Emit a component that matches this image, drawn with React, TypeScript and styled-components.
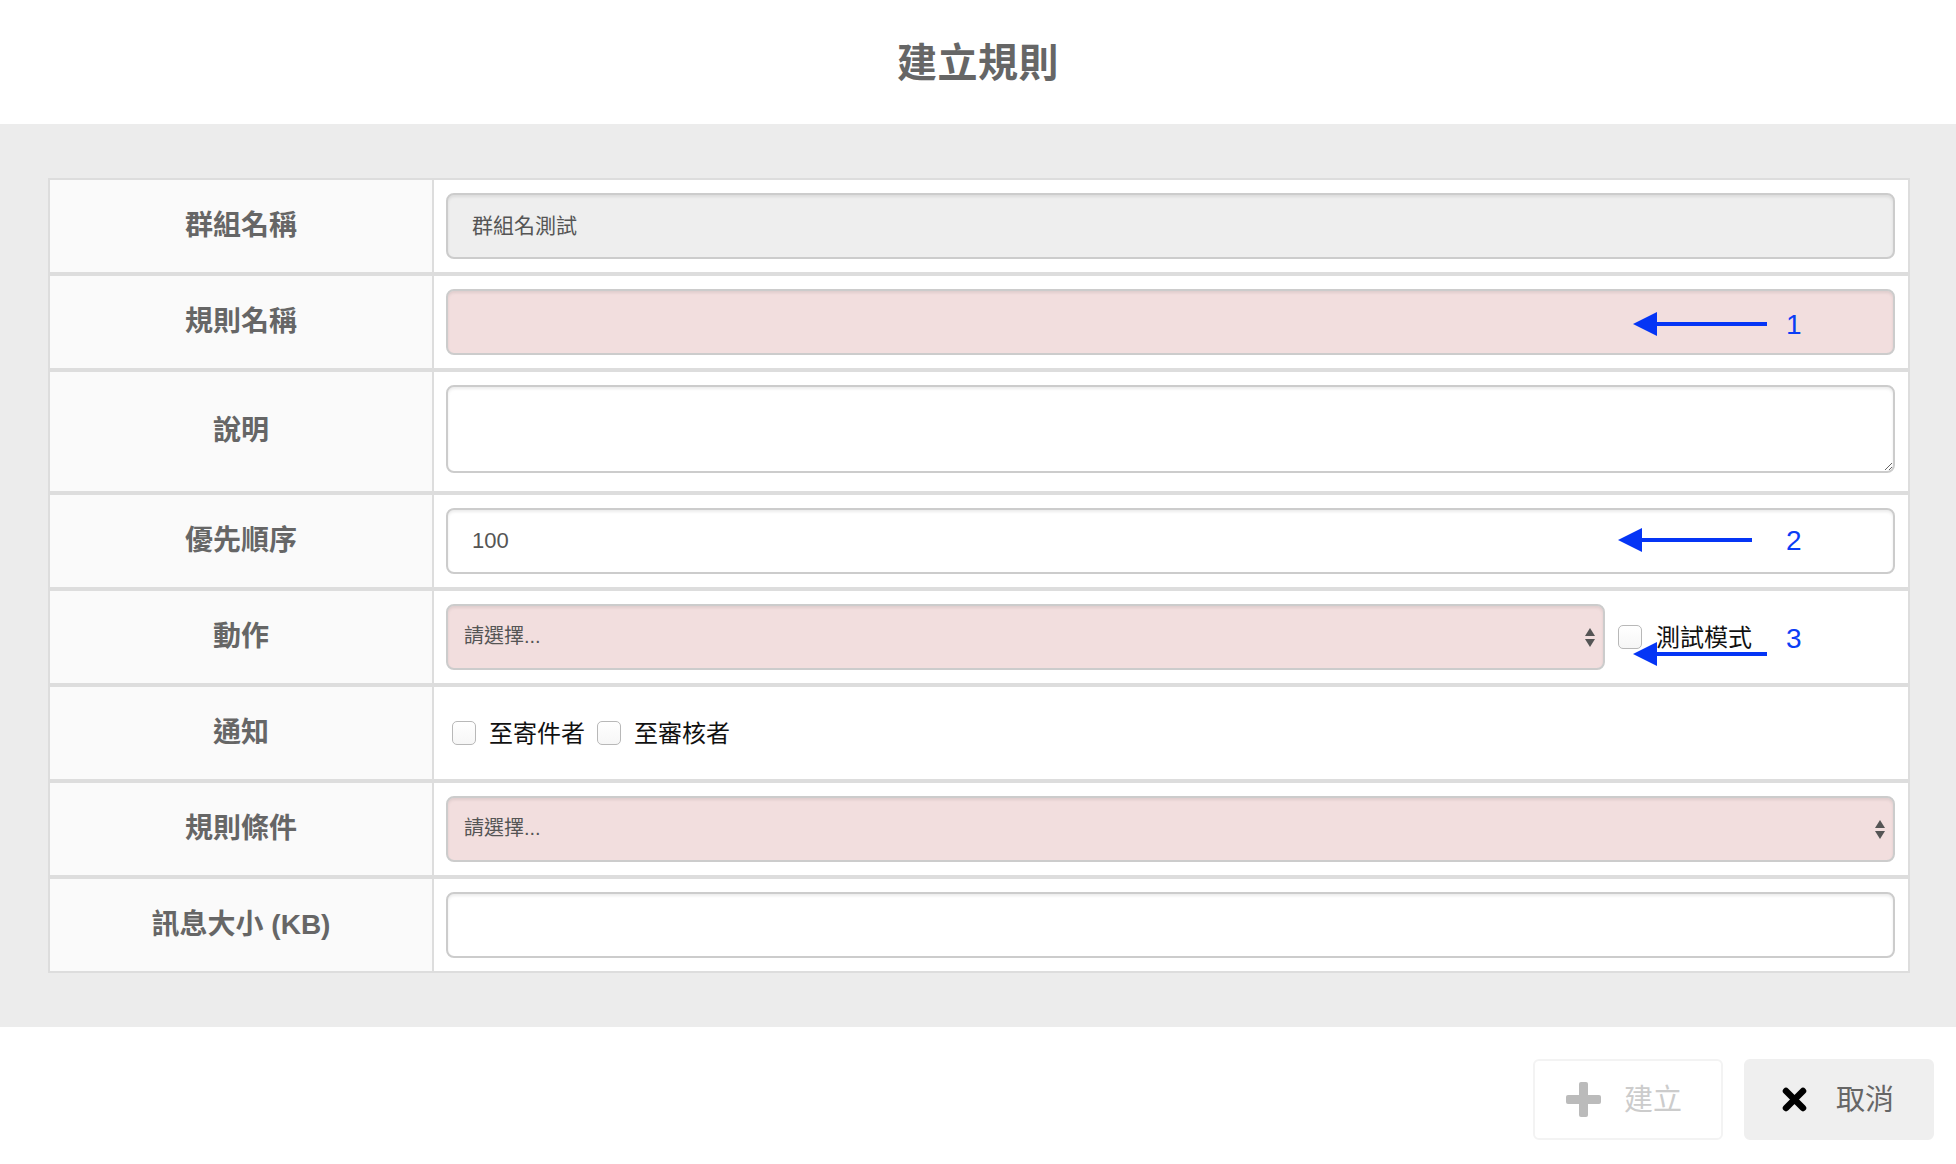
import React from "react";
import styled, { createGlobalStyle } from "styled-components";

const GlobalStyle = createGlobalStyle`
  html, body { margin: 0; padding: 0; background: #ffffff; }
  body { font-family: "Liberation Sans", "Noto Sans CJK TC", sans-serif; }
  * { box-sizing: border-box; }
`;

const Page = styled.div`
  width: 1956px;
  min-height: 1164px;
  display: flex;
  flex-direction: column;
  background: #fff;
`;

const Header = styled.header`
  height: 124px;
  display: flex;
  align-items: center;
  justify-content: center;
  padding-bottom: 5px;
`;

const Title = styled.h1`
  margin: 0;
  font-size: 40px;
  font-weight: 700;
  color: #666;
  letter-spacing: 0.5px;
`;

const Body = styled.main`
  background: #ececec;
  padding: 54px 46px 54px 48px;
`;

const FormTable = styled.div`
  border: 2px solid #dddddd;
  background: #fff;
  display: flex;
  flex-direction: column;
`;

const Row = styled.div`
  display: grid;
  grid-template-columns: 384px 1fr;
  border-bottom: 4px solid #dddddd;
  &:last-child { border-bottom: none; }
`;

const LabelCell = styled.div`
  background: #fafafa;
  border-right: 2px solid #dddddd;
  display: flex;
  align-items: center;
  justify-content: center;
  padding-bottom: 7px;
  font-size: 28px;
  font-weight: 700;
  color: #666;
`;

const ValueCell = styled.div<{ $padBottom?: number }>`
  position: relative;
  display: flex;
  align-items: center;
  min-height: 92px;
  padding: 13px 13px ${(p) => p.$padBottom ?? 13}px 12px;
`;

const TextInput = styled.input<{ $bg?: string; $cjk?: boolean; $size?: number }>`
  width: 100%;
  height: 66px;
  border: 2px solid #cccccc;
  border-radius: 8px;
  box-shadow: inset 0 2px 3px rgba(0, 0, 0, 0.08);
  background: ${(p) => p.$bg ?? "#fff"};
  padding: 0 24px ${(p) => (p.$cjk ? 5 : 0)}px 24px;
  font-family: "Liberation Sans", "Noto Sans CJK TC", sans-serif;
  font-size: ${(p) => p.$size ?? 21}px;
  color: #555;
  outline: none;
`;

const TextArea = styled.textarea`
  width: 100%;
  height: 88px;
  border: 2px solid #cccccc;
  border-radius: 8px;
  box-shadow: inset 0 2px 3px rgba(0, 0, 0, 0.08);
  background: #fff;
  padding: 10px 24px;
  font-family: "Liberation Sans", "Noto Sans CJK TC", sans-serif;
  font-size: 21px;
  color: #555;
  outline: none;
  resize: vertical;
  display: block;
  align-self: flex-start;
`;

const SelectBox = styled.div`
  flex: 1;
  height: 66px;
  border: 2px solid #cccccc;
  border-radius: 8px;
  box-shadow: inset 0 2px 3px rgba(0, 0, 0, 0.08);
  background: #f2dede;
  padding: 0 8px 0 16px;
  display: flex;
  align-items: center;
  justify-content: space-between;
  font-size: 20px;
  color: #555;
`;

const SelectText = styled.span`
  padding-bottom: 5px;
`;

const TestMode = styled.label`
  width: 277px;
  margin-left: 13px;
  flex-shrink: 0;
  display: flex;
  align-items: center;
  gap: 14px;
  font-size: 24px;
  color: #111;
`;

const CheckGroup = styled.div`
  display: flex;
  align-items: center;
  gap: 12px;
  padding-left: 6px;
`;

const CheckLabel = styled.label`
  display: flex;
  align-items: center;
  gap: 13px;
  font-size: 24px;
  color: #111;
`;

const CheckText = styled.span`
  padding-bottom: 4px;
`;

const CheckBox = styled.input.attrs({ type: "checkbox" })`
  appearance: none;
  -webkit-appearance: none;
  margin: 0;
  width: 24px;
  height: 24px;
  border: 1.5px solid #b8b8b8;
  border-radius: 5px;
  background: linear-gradient(#fff, #f6f6f6);
  flex-shrink: 0;
`;

const Arrow = styled.svg<{ $left: number; $top: number }>`
  position: absolute;
  left: ${(p) => p.$left}px;
  top: ${(p) => p.$top}px;
  z-index: 2;
`;

const Marker = styled.span<{ $left: number; $top: number }>`
  position: absolute;
  left: ${(p) => p.$left}px;
  top: ${(p) => p.$top}px;
  font-family: "Liberation Sans", sans-serif;
  font-size: 28px;
  line-height: 28px;
  color: #0b3df5;
  z-index: 2;
`;

const Footer = styled.footer`
  flex: 1;
  display: flex;
  justify-content: flex-end;
  align-items: flex-start;
  gap: 21px;
  padding: 32px 22px 0 0;
`;

const Button = styled.button<{ $variant: "create" | "cancel" }>`
  width: 190px;
  height: 81px;
  border-radius: 6px;
  display: flex;
  align-items: center;
  font-family: "Liberation Sans", "Noto Sans CJK TC", sans-serif;
  font-size: 29px;
  cursor: pointer;
  border: 2px solid ${(p) => (p.$variant === "create" ? "#f3f3f3" : "#efefef")};
  background: ${(p) => (p.$variant === "create" ? "#ffffff" : "#efefef")};
  color: ${(p) => (p.$variant === "create" ? "#cccccc" : "#666666")};
  padding: 0 0 0 ${(p) => (p.$variant === "create" ? 31 : 36)}px;
  gap: ${(p) => (p.$variant === "create" ? 23 : 29)}px;
`;

const ButtonText = styled.span`
  padding-bottom: 5px;
`;

const SelectArrows = () => (
  <svg width="10" height="19" viewBox="0 0 10 19">
    <polygon points="5,0 10,8 0,8" fill="#555" />
    <polygon points="0,11 10,11 5,19" fill="#555" />
  </svg>
);

const BlueArrow = ({ left, top }: { left: number; top: number }) => (
  <Arrow $left={left} $top={top} width="134" height="24" viewBox="0 0 134 24">
    <polygon points="0,12 24,0 24,24" fill="#0535f5" />
    <rect x="20" y="10" width="114" height="4" fill="#0535f5" />
  </Arrow>
);

const PlusIcon = () => (
  <svg width="35" height="35" viewBox="0 0 35 35">
    <rect x="13" y="0" width="9" height="35" rx="2" fill="#bbbbbb" />
    <rect x="0" y="13" width="35" height="9" rx="2" fill="#bbbbbb" />
  </svg>
);

const TimesIcon = () => (
  <svg width="25" height="25" viewBox="0 0 25 25">
    <path d="M4 4 L21 21 M21 4 L4 21" stroke="#000" strokeWidth="6.5" strokeLinecap="round" />
  </svg>
);

export default function App() {
  return (
    <Page>
      <GlobalStyle />
      <Header>
        <Title>建立規則</Title>
      </Header>
      <Body>
        <FormTable>
          <Row>
            <LabelCell>群組名稱</LabelCell>
            <ValueCell>
              <TextInput $bg="#eeeeee" $cjk readOnly value="群組名測試" />
            </ValueCell>
          </Row>
          <Row>
            <LabelCell>規則名稱</LabelCell>
            <ValueCell>
              <TextInput $bg="#f2dede" readOnly value="" />
              <BlueArrow left={1199} top={36} />
              <Marker $left={1352} $top={35}>1</Marker>
            </ValueCell>
          </Row>
          <Row>
            <LabelCell>說明</LabelCell>
            <ValueCell $padBottom={18}>
              <TextArea readOnly value="" />
            </ValueCell>
          </Row>
          <Row>
            <LabelCell>優先順序</LabelCell>
            <ValueCell>
              <TextInput $size={22} readOnly value="100" />
              <BlueArrow left={1184} top={33} />
              <Marker $left={1352} $top={32}>2</Marker>
            </ValueCell>
          </Row>
          <Row>
            <LabelCell>動作</LabelCell>
            <ValueCell>
              <SelectBox>
                <SelectText>請選擇...</SelectText>
                <SelectArrows />
              </SelectBox>
              <TestMode>
                <CheckBox />
                <CheckText>測試模式</CheckText>
              </TestMode>
              <BlueArrow left={1199} top={51} />
              <Marker $left={1352} $top={34}>3</Marker>
            </ValueCell>
          </Row>
          <Row>
            <LabelCell>通知</LabelCell>
            <ValueCell>
              <CheckGroup>
                <CheckLabel>
                  <CheckBox />
                  <CheckText>至寄件者</CheckText>
                </CheckLabel>
                <CheckLabel>
                  <CheckBox />
                  <CheckText>至審核者</CheckText>
                </CheckLabel>
              </CheckGroup>
            </ValueCell>
          </Row>
          <Row>
            <LabelCell>規則條件</LabelCell>
            <ValueCell>
              <SelectBox>
                <SelectText>請選擇...</SelectText>
                <SelectArrows />
              </SelectBox>
            </ValueCell>
          </Row>
          <Row>
            <LabelCell>訊息大小 (KB)</LabelCell>
            <ValueCell>
              <TextInput readOnly value="" />
            </ValueCell>
          </Row>
        </FormTable>
      </Body>
      <Footer>
        <Button $variant="create">
          <PlusIcon />
          <ButtonText>建立</ButtonText>
        </Button>
        <Button $variant="cancel">
          <TimesIcon />
          <ButtonText>取消</ButtonText>
        </Button>
      </Footer>
    </Page>
  );
}
